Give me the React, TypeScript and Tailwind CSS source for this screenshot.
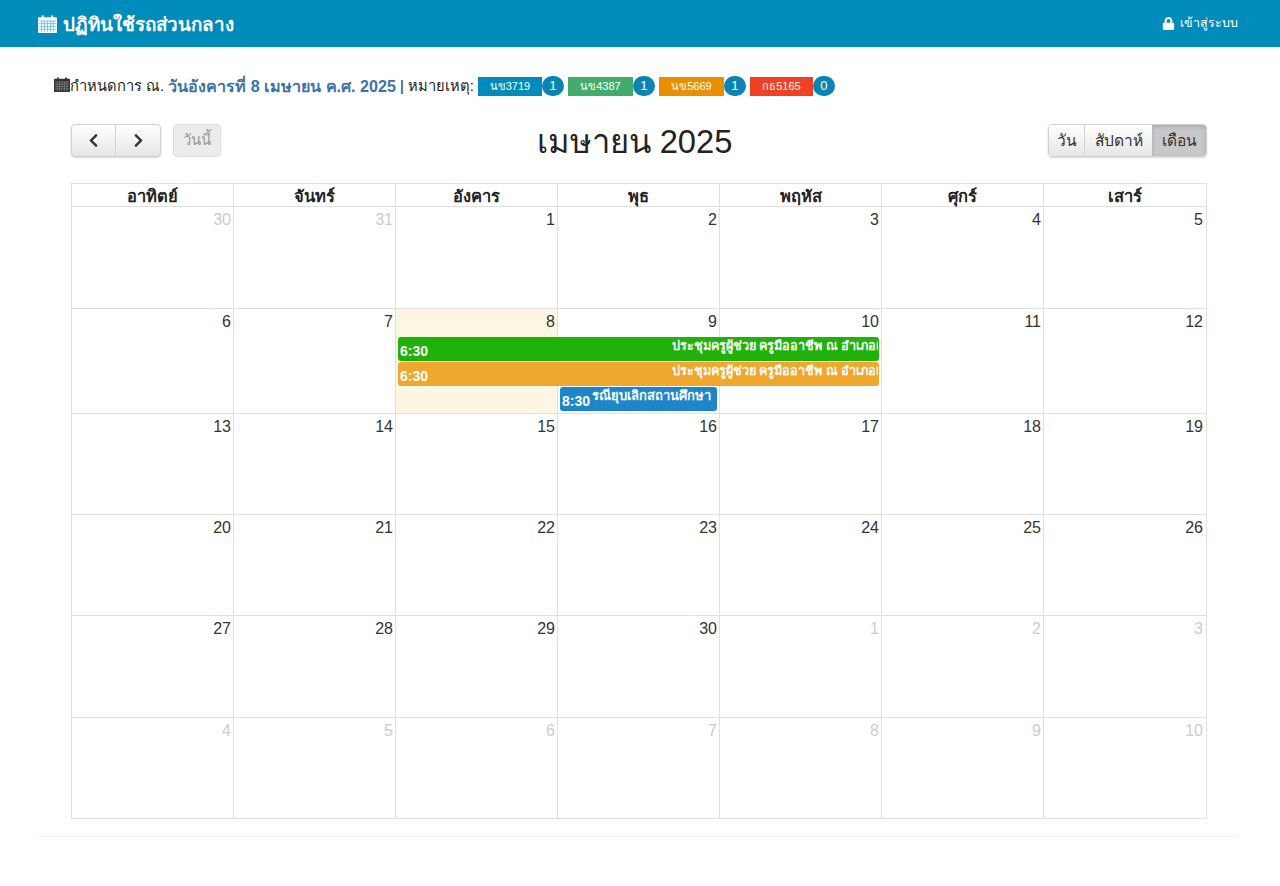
import { FaChevronLeft, FaChevronRight, FaLock } from 'react-icons/fa'

const DAYS = ['อาทิตย์', 'จันทร์', 'อังคาร', 'พุธ', 'พฤหัส', 'ศุกร์', 'เสาร์']

type Cell = { n: number; muted?: boolean; today?: boolean }

const d = (n: number, muted = false, today = false): Cell => ({ n, muted, today })
const range = (a: number, b: number, muted = false) =>
  Array.from({ length: b - a + 1 }, (_, i) => d(a + i, muted))

const WEEKS: { cells: Cell[]; height: string }[] = [
  { cells: [d(30, true), d(31, true), ...range(1, 5)], height: 'h-[102px]' },
  { cells: [d(6), d(7), d(8, false, true), ...range(9, 12)], height: 'h-[105px]' },
  { cells: range(13, 19), height: 'h-[101px]' },
  { cells: range(20, 26), height: 'h-[101px]' },
  { cells: [...range(27, 30), d(1, true), d(2, true), d(3, true)], height: 'h-[102px]' },
  { cells: range(4, 10, true), height: 'h-[100px]' },
]

const LEGEND = [
  { plate: 'นข3719', count: 1, color: 'bg-[#008cba]', width: 'w-[64px]' },
  { plate: 'นข4387', count: 1, color: 'bg-[#43ac6a]', width: 'w-[65px]' },
  { plate: 'นข5669', count: 1, color: 'bg-[#e99002]', width: 'w-[65px]' },
  { plate: 'กธ5165', count: 0, color: 'bg-[#f04124]', width: 'w-[63px]' },
]

function CalendarIcon({ className }: { className: string }) {
  return (
    <svg viewBox="0 0 18 17" className={className} aria-hidden="true">
      <path
        fill="currentColor"
        d="M1 2h2.5V.5h2V2h7V.5h2V2H17a1 1 0 0 1 1 1v13a1 1 0 0 1-1 1H1a1 1 0 0 1-1-1V3a1 1 0 0 1 1-1z"
      />
      <path
        fill="none"
        stroke="var(--cal-cell)"
        strokeWidth="0.7"
        d="M0.8 5.6H17.2M0.8 8.2H17.2M0.8 10.8H17.2M0.8 13.4H17.2M3.5 5.6V16M6.2 5.6V16M9 5.6V16M11.8 5.6V16M14.5 5.6V16"
      />
    </svg>
  )
}

function EventBar({
  time,
  title,
  color,
  span,
  start,
  titleClass,
}: {
  time: string
  title: string
  color: string
  span: string
  start: string
  titleClass: string
}) {
  return (
    <div
      className={`${start} ${span} ml-[2px] mr-[3px] mb-[1px] h-[24px] rounded-[3px] ${color} flex items-end justify-between overflow-hidden text-white font-bold pl-[2px] pr-[1px] pb-[2px]`}
    >
      <span className="shrink-0 text-[14px] leading-[16px]">{time}</span>
      <span className={`${titleClass} whitespace-nowrap overflow-hidden self-start leading-[18px]`}>{title}</span>
    </div>
  )
}

export default function App() {
  return (
    <div className="min-h-[886px] bg-white font-['Liberation_Sans','Noto_Sans',sans-serif] text-[#222222]">
      {/* Top bar */}
      <header className="h-[47px] bg-[#008cba] flex items-center justify-between pl-[38px] pr-[42px] text-white">
        <div className="flex items-center gap-[6px] [--cal-cell:#5fb4d2]">
          <CalendarIcon className="w-[19px] h-[20px] text-white" />
          <span className="text-[18.8px] leading-[24px] font-bold mt-[3px]">ปฏิทินใช้รถส่วนกลาง</span>
        </div>
        <div className="flex items-center gap-[5px] text-[12.5px]">
          <FaLock className="w-[13px] h-[13px]" />
          <span>เข้าสู่ระบบ</span>
        </div>
      </header>

      <main className="ml-[38px] mr-[42px] border-b border-[#f4f4f4] pt-[29px] pb-[17px]">
        {/* Summary line */}
        <div className="pl-[16px] flex items-center h-[20px] text-[14.7px] [--cal-cell:#8a8a8a]">
          <CalendarIcon className="w-[16px] h-[17px] text-[#333333] mb-[3px]" />
          <span>กำหนดการ ณ.&nbsp;</span>
          <b className="text-[#3a73a8] text-[16.1px]">วันอังคารที่ 8 เมษายน ค.ศ. 2025</b>
          <span>&nbsp;| หมายเหตุ:&nbsp;</span>
          <div className="flex items-center gap-[4px]">
            {LEGEND.map((l) => (
              <div key={l.plate} className="flex items-center">
                <span
                  className={`${l.width} ${l.color} h-[19px] pt-[1px] flex items-center justify-center text-white text-[11px]`}
                >
                  {l.plate}
                </span>
                <span className="w-[22px] h-[20px] rounded-full bg-[#0a85b3] text-white text-[13px] flex items-center justify-center">
                  {l.count}
                </span>
              </div>
            ))}
          </div>
        </div>

        <section className="pl-[33px] pr-[31px] pt-[27px]">
          {/* Toolbar */}
          <div className="flex items-start justify-between h-[60px]">
            <div className="flex gap-[12px] pt-[1px]">
              <div className="flex h-[33px] rounded-[4px] border border-[#d0d0d0] shadow-[0_1px_2px_rgba(0,0,0,0.15)] bg-gradient-to-b from-[#ffffff] to-[#e6e6e6]">
                <button className="w-[44px] flex items-center justify-center border-r border-[#d5d5d5] text-[#333333]">
                  <FaChevronLeft className="w-[15px] h-[15px]" />
                </button>
                <button className="w-[44px] flex items-center justify-center text-[#333333]">
                  <FaChevronRight className="w-[15px] h-[15px]" />
                </button>
              </div>
              <button className="w-[48px] h-[33px] rounded-[4px] border border-[#dddddd] bg-[#ececec] text-[#9a9a9a] text-[15px]">
                วันนี้
              </button>
            </div>
            <h2 className="text-[32.7px] leading-[38px] text-[#222222]">เมษายน 2025</h2>
            <div className="flex h-[33px] mt-[1px] rounded-[4px] border border-[#d0d0d0] shadow-[0_1px_2px_rgba(0,0,0,0.15)] overflow-hidden text-[15.5px] text-[#333333]">
              <button className="w-[36px] bg-gradient-to-b from-[#ffffff] to-[#e6e6e6] border-r border-[#d5d5d5]">วัน</button>
              <button className="w-[67px] bg-gradient-to-b from-[#ffffff] to-[#e6e6e6]">สัปดาห์</button>
              <button className="w-[54px] bg-[#c8c8c8] shadow-[inset_0_2px_4px_rgba(0,0,0,0.15)]">เดือน</button>
            </div>
          </div>

          {/* Calendar */}
          <div className="border border-[#e0e0e0]">
            <div className="grid grid-cols-7 h-[23px] border-b border-[#e0e0e0]">
              {DAYS.map((name, i) => (
                <div
                  key={name}
                  className={`flex items-center justify-center pb-[2px] text-[16.5px] font-bold ${i < 6 ? 'border-r border-[#e0e0e0]' : ''}`}
                >
                  {name}
                </div>
              ))}
            </div>
            {WEEKS.map((w, wi) => (
              <div
                key={wi}
                className={`relative ${w.height} ${wi < WEEKS.length - 1 ? 'border-b border-[#e0e0e0]' : ''}`}
              >
                <div className="absolute inset-0 grid grid-cols-7">
                  {w.cells.map((c, i) => (
                    <div
                      key={i}
                      className={`${i < 6 ? 'border-r border-[#e0e0e0]' : ''} ${c.today ? 'bg-[#fcf6e3]' : ''}`}
                    />
                  ))}
                </div>
                <div className="relative grid grid-cols-7">
                  {w.cells.map((c, i) => (
                    <div
                      key={i}
                      className={`h-[28px] pr-[3px] pt-[3px] text-right text-[16px] leading-[20px] ${
                        c.muted ? 'text-[#cccccc]' : 'text-[#333333]'
                      }`}
                    >
                      {c.n}
                    </div>
                  ))}
                  {wi === 1 && (
                    <>
                      <EventBar
                        start="col-start-3"
                        span="col-span-3"
                        color="bg-[#20b20a]"
                        time="6:30"
                        title="ประชุมครูผู้ช่วย ครูมืออาชีพ ณ อำเภอเมือง"
                        titleClass="w-[206px] text-[12.6px]"
                      />
                      <EventBar
                        start="col-start-3"
                        span="col-span-3"
                        color="bg-[#f0a72d]"
                        time="6:30"
                        title="ประชุมครูผู้ช่วย ครูมืออาชีพ ณ อำเภอเมือง"
                        titleClass="w-[206px] text-[12.6px]"
                      />
                      <EventBar
                        start="col-start-4"
                        span="col-span-1"
                        color="bg-[#1e86c8]"
                        time="8:30"
                        title="รณียุบเลิกสถานศึกษา"
                        titleClass="w-[124px] text-[13px]"
                      />
                    </>
                  )}
                </div>
              </div>
            ))}
          </div>
        </section>
      </main>
    </div>
  )
}
